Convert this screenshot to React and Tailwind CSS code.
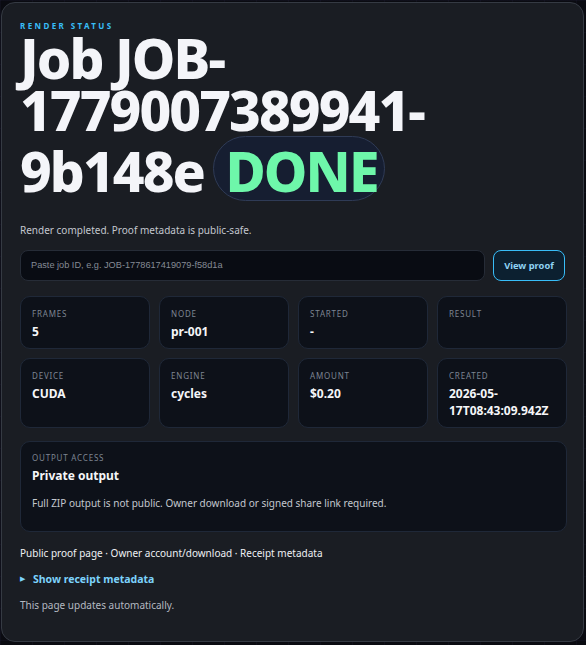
export default function App() {
  const stats = [
    { label: "FRAMES", value: "5" },
    { label: "NODE", value: "pr-001" },
    { label: "STARTED", value: "-" },
    { label: "RESULT", value: "" },
    { label: "DEVICE", value: "CUDA" },
    { label: "ENGINE", value: "cycles" },
    { label: "AMOUNT", value: "$0.20" },
    { label: "CREATED", value: "2026-05-17T08:43:09.942Z" },
  ];
  return (
    <div
      className="min-h-[645px] w-[586px] bg-[#0a0b11] pt-[2px] pl-[1px] pr-[2px] bg-[linear-gradient(rgba(120,110,200,0.05)_1px,transparent_1px),linear-gradient(90deg,rgba(120,110,200,0.05)_1px,transparent_1px)] bg-[size:32px_32px]"
      style={{ fontFamily: '"Noto Sans", "Open Sans", sans-serif' }}
    >
      <div className="w-[583px] h-[640px] rounded-[14px] border border-[#353a43] bg-[#1a1d23] px-[18px] pt-[17px]">
        <div className="text-[8px] font-bold tracking-[0.3em] text-[#38bdf8] leading-[12px]">
          RENDER STATUS
        </div>
        <h1 className="text-[55px] font-extrabold leading-[52px] tracking-[-0.035em] text-[#f4f5f9]">
          Job JOB-1779007389941-9b148e{" "}
          <span className="ml-[-3px] inline-block align-baseline rounded-full border border-[#2f3b56] bg-[#161e31] pl-[11px] pr-[6px] pt-[8px] pb-[3px] leading-[52px] text-[#6ef7aa]">
            DONE
          </span>
        </h1>
        <p className="mt-[21px] text-[10px] leading-[16px] text-[#c3c7ce]">
          Render completed. Proof metadata is public-safe.
        </p>
        <div className="mt-[12px] flex gap-[8px]">
          <div
            className="flex h-[31px] flex-1 items-center rounded-[8px] border border-[#262c37] bg-[#090c13] px-[10px] text-[9.2px] text-[#858b95]"
            style={{ fontFamily: '"Liberation Sans", Arial, sans-serif' }}
          >
            Paste job ID, e.g. JOB-1778617419079-f58d1a
          </div>
          <button className="h-[31px] w-[72px] rounded-[8px] border border-[#38bdf8] bg-[#0c2030] text-[9.3px] font-bold text-[#8fd3f5]">
            View proof
          </button>
        </div>
        <div className="mt-[15px] grid grid-cols-4 gap-[9px] w-[547px]">
          {stats.map((s) => (
            <div
              key={s.label}
              className="rounded-[10px] border border-[#1f2838] bg-[#0d1119] px-[11px] pt-[11px] pb-[8px] min-h-[53px]"
            >
              <div className="text-[8px] tracking-[0.1em] text-[#7d8592] leading-[12px]">
                {s.label}
              </div>
              <div className="mt-[3px] text-[12px] font-bold leading-[17px] text-[#f5f6f8] break-words">
                {s.value}
              </div>
            </div>
          ))}
        </div>
        <div className="mt-[13px] w-[547px] rounded-[10px] border border-[#1f2838] bg-[#0d1119] px-[11px] pt-[10px] h-[91px]">
          <div className="text-[8px] tracking-[0.1em] text-[#7d8592] leading-[12px]">
            OUTPUT ACCESS
          </div>
          <div className="mt-[3px] text-[12px] font-bold leading-[17px] text-[#f5f6f8]">
            Private output
          </div>
          <div className="mt-[11px] text-[10px] leading-[16px] text-[#c3c7ce]">
            Full ZIP output is not public. Owner download or signed share link required.
          </div>
        </div>
        <div className="mt-[13px] text-[10px] leading-[16px] text-[#eef0f3]">
          Public proof page · Owner account/download · Receipt metadata
        </div>
        <div className="mt-[10px] flex items-center text-[10.5px] leading-[16px]">
          <span className="text-[7px] text-[#7dd3fc] w-[13px]">▶</span>
          <span className="font-bold text-[#7dd3fc]">Show receipt metadata</span>
        </div>
        <div className="mt-[10px] text-[10px] leading-[16px] text-[#b4b9c1]">
          This page updates automatically.
        </div>
      </div>
    </div>
  );
}
